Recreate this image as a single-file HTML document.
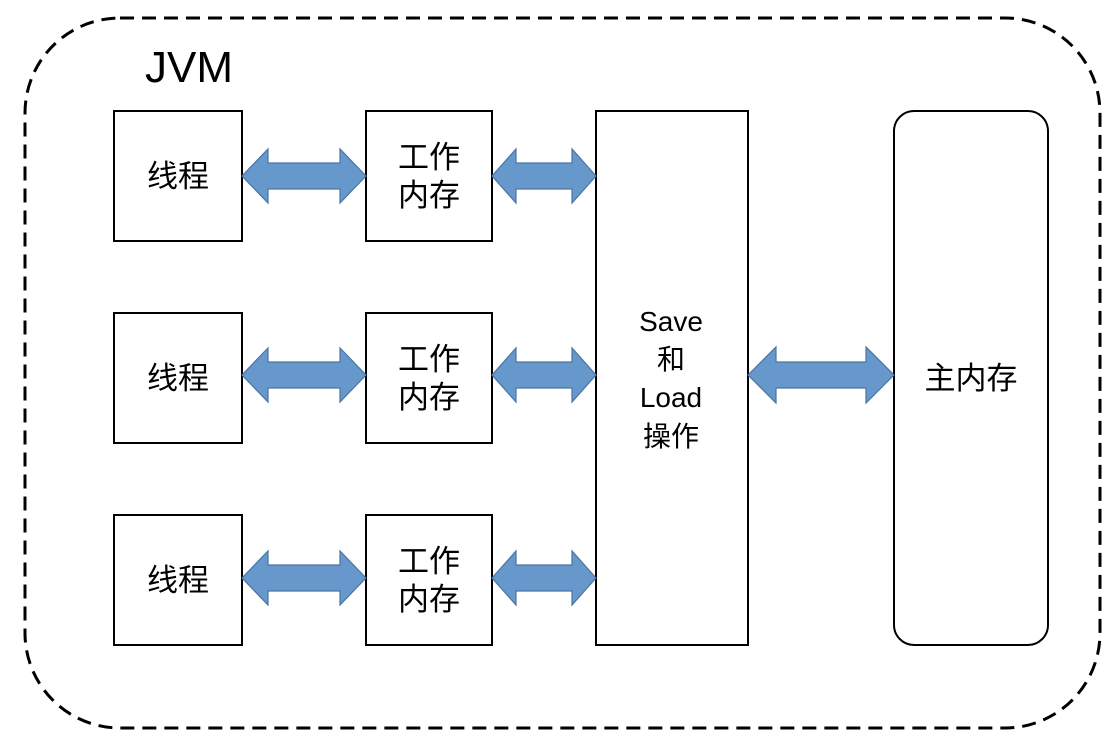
<!DOCTYPE html>
<html><head><meta charset="utf-8"><style>
html,body{margin:0;padding:0;background:#fff;}
svg{display:block}
text{font-family:"Liberation Sans","Noto Sans CJK SC",sans-serif;fill:#000;}
</style></head><body>
<svg width="1118" height="744" viewBox="0 0 1118 744" xmlns="http://www.w3.org/2000/svg">
<rect x="25" y="18" width="1075" height="710" rx="95" ry="95" fill="none" stroke="#000" stroke-width="3" stroke-dasharray="14,8"/>
<text x="145" y="82" font-size="44">JVM</text>
<g fill="#fff" stroke="#000" stroke-width="2">
<rect x="114" y="111" width="128" height="130"/>
<rect x="114" y="313" width="128" height="130"/>
<rect x="114" y="515" width="128" height="130"/>
<rect x="366" y="111" width="126" height="130"/>
<rect x="366" y="313" width="126" height="130"/>
<rect x="366" y="515" width="126" height="130"/>
<rect x="596" y="111" width="152" height="534"/>
<rect x="894" y="111" width="154" height="534" rx="20" ry="20"/>
</g>
<defs>
<path id="a1" d="M0,0 L26,-27 L26,-13 L98,-13 L98,-27 L124,0 L98,27 L98,13 L26,13 L26,27 Z"/>
<path id="a2" d="M0,0 L24,-27 L24,-13 L80,-13 L80,-27 L104,0 L80,27 L80,13 L24,13 L24,27 Z"/>
<path id="a3" d="M0,0 L28,-28 L28,-13 L118,-13 L118,-28 L146,0 L118,28 L118,13 L28,13 L28,28 Z"/>
</defs>
<g fill="#6798cc" stroke="#4a73a3" stroke-width="1.2">
<use href="#a1" x="242" y="176"/>
<use href="#a1" x="242" y="375"/>
<use href="#a1" x="242" y="578"/>
<use href="#a2" x="492" y="176"/>
<use href="#a2" x="492" y="375"/>
<use href="#a2" x="492" y="578"/>
<use href="#a3" x="748" y="375"/>
</g>
<g font-size="31" text-anchor="middle">
<text x="178" y="187">线程</text>
<text x="178" y="389">线程</text>
<text x="178" y="591">线程</text>
<text x="429" y="168">工作</text>
<text x="429" y="206">内存</text>
<text x="429" y="370">工作</text>
<text x="429" y="408">内存</text>
<text x="429" y="572">工作</text>
<text x="429" y="610">内存</text>
<text x="971" y="389">主内存</text>
</g>
<g font-size="28" text-anchor="middle">
<text x="671" y="331">Save</text>
<text x="671" y="369">和</text>
<text x="671" y="407">Load</text>
<text x="671" y="446">操作</text>
</g>
</svg>
</body></html>
